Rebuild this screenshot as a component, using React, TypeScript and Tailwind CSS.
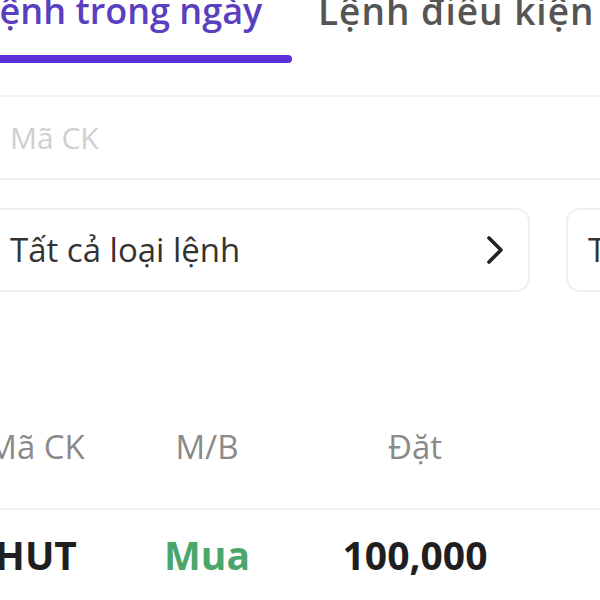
import { ChevronRight } from 'lucide-react';

export default function App() {
  return (
    <div className="w-[600px] h-[600px] overflow-hidden bg-white font-['Open_Sans',sans-serif]">
      <div className="ml-[-24px] mt-[-14px] w-[700px]">
        {/* tabs */}
        <div className="flex h-[111px] border-b-2 border-[#f0f0f0]">
          <div className="relative w-[316px] pl-[4px]">
            <div className="text-[36px] leading-[50px] font-semibold text-[#5a3fc0] whitespace-nowrap">
              Lệnh trong ngày
            </div>
            <div className="absolute left-0 right-0 top-[69px] h-[8px] rounded-full bg-[#5a2fd8]" />
          </div>
          <div className="pl-[26px] text-[37px] leading-[50px] font-semibold tracking-[1px] text-[#555] whitespace-nowrap">
            Lệnh điều kiện
          </div>
        </div>

        {/* search */}
        <div className="h-[83px] flex items-center pl-[34px] border-b-2 border-[#f0f0f0]">
          <span className="text-[30px] text-[#cfcfcf]">Mã CK</span>
        </div>

        {/* filters */}
        <div className="flex gap-[36px] mt-[28px] ml-[-20px]">
          <div className="w-[574px] h-[84px] shrink-0 rounded-[14px] border-2 border-[#f0f0f0] flex items-center justify-between pl-[52px] pr-[9px]">
            <span className="text-[33px] text-[#333]">Tất cả loại lệnh</span>
            <ChevronRight size={48} strokeWidth={1.8} className="text-[#222]" />
          </div>
          <div className="w-[300px] h-[84px] shrink-0 rounded-[14px] border-2 border-[#f0f0f0] flex items-center pl-[20px]">
            <span className="text-[33px] text-[#333]">Tất cả</span>
          </div>
        </div>

        {/* table header */}
        <div className="mt-[102px] h-[116px] pb-[8px] flex items-center border-b-2 border-[#f3f3f3] text-[33px] text-[#8a8a8a]">
          <span className="w-[120px] text-center">Mã CK</span>
          <span className="w-[222px] text-center">M/B</span>
          <span className="w-[194px] text-center">Đặt</span>
        </div>

        {/* row */}
        <div className="h-[90px] flex items-center text-[39px] font-bold">
          <span className="w-[120px] text-center text-[#1f1f1f]">HUT</span>
          <span className="w-[222px] text-center text-[#4aa66a]">Mua</span>
          <span className="w-[194px] text-center text-[#1f1f1f]">100,000</span>
        </div>
      </div>
    </div>
  );
}
